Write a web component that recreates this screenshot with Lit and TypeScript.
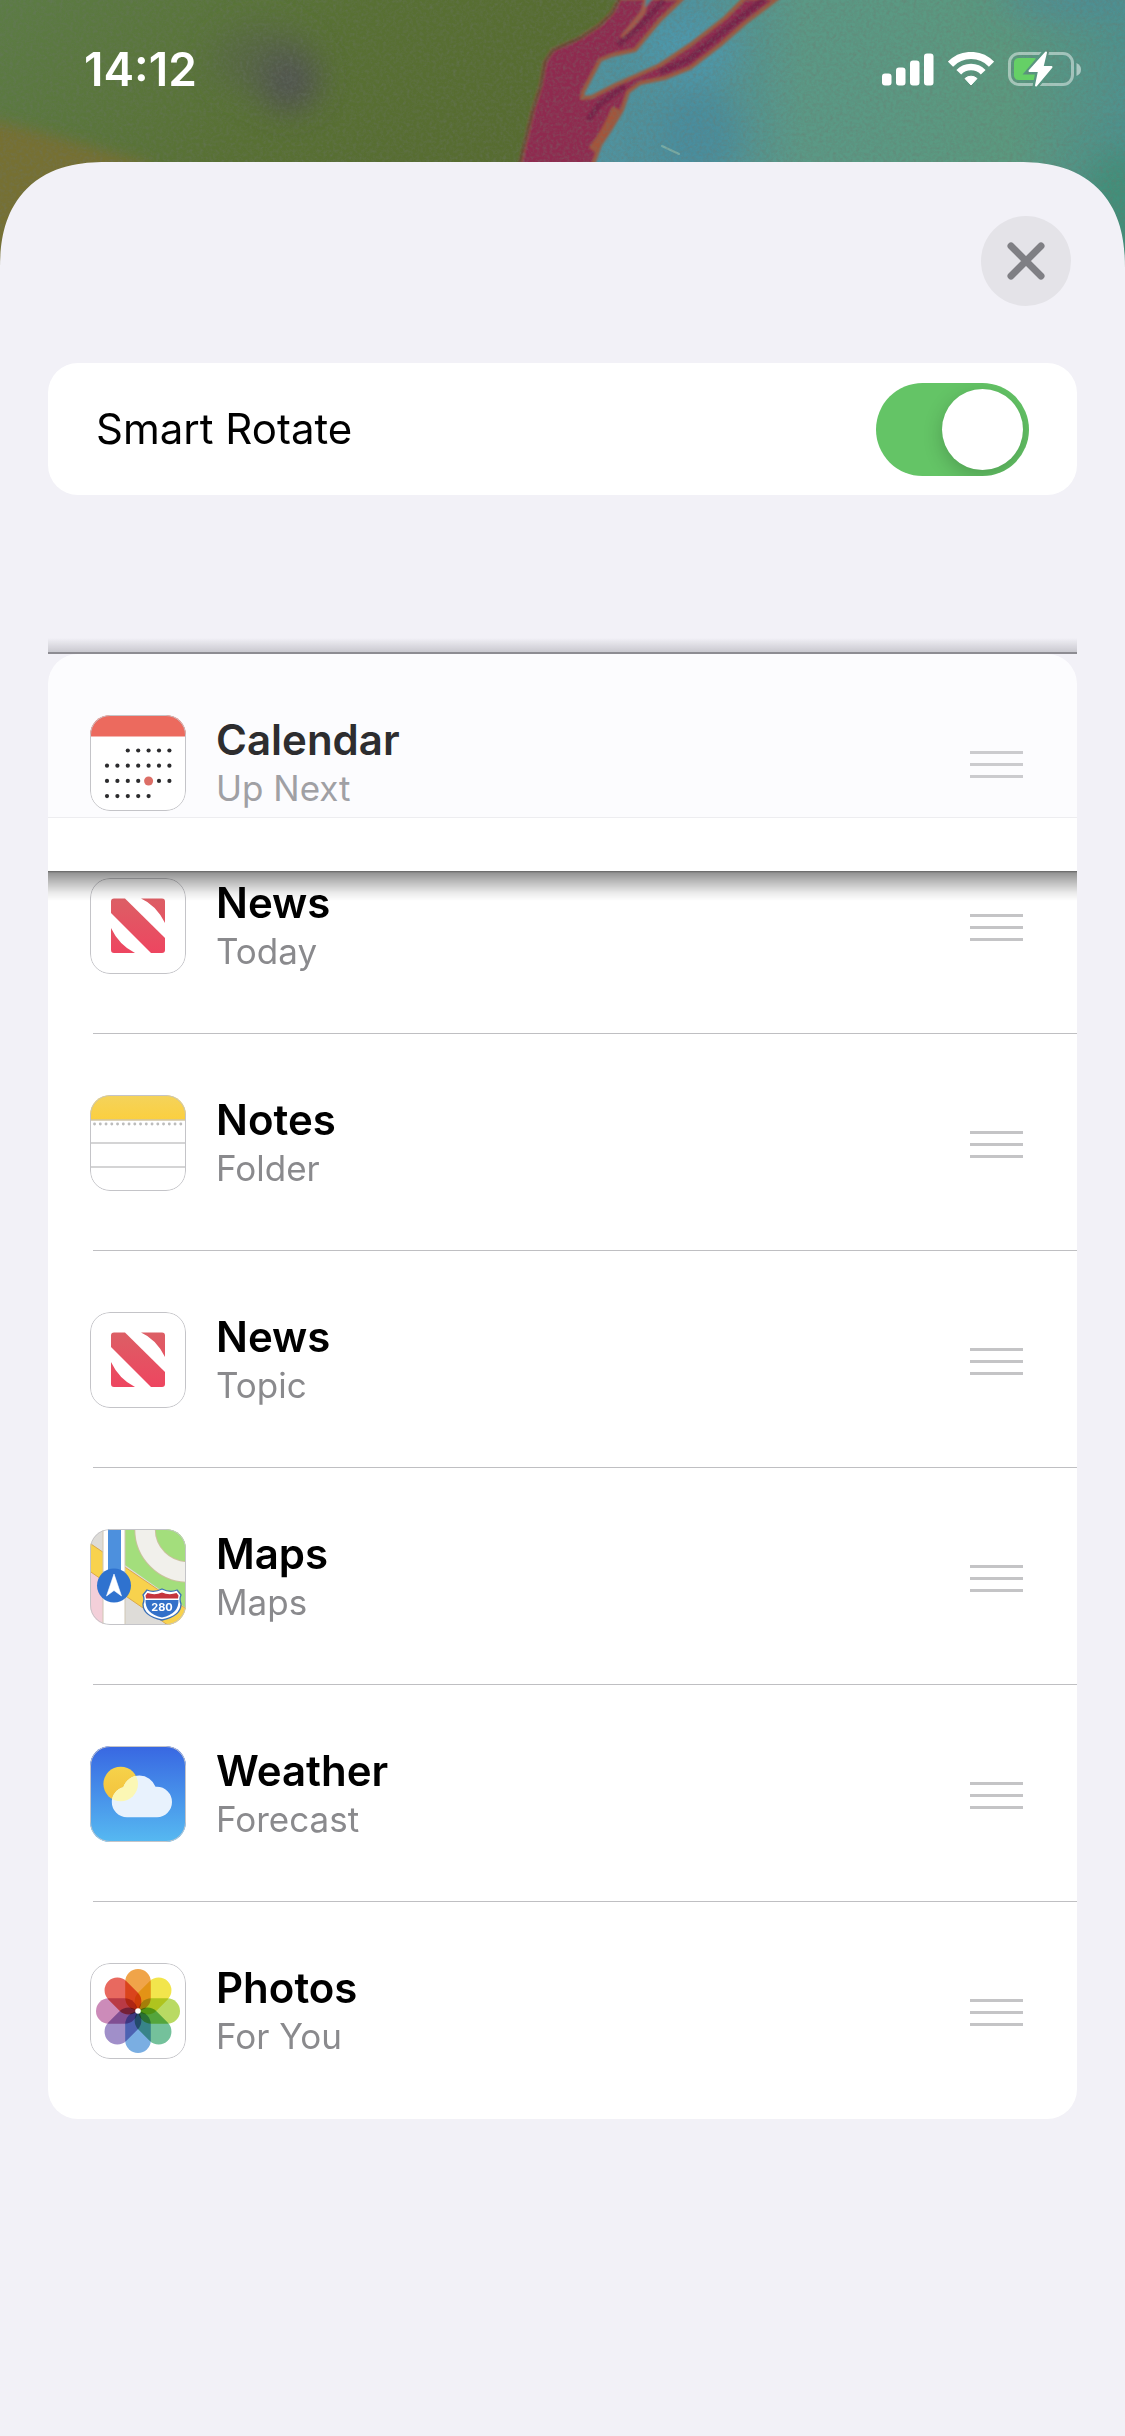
import { LitElement, html, svg, css, type SVGTemplateResult } from "lit";
import { customElement, property, state } from "lit/decorators.js";
import { classMap } from "lit/directives/class-map.js";

interface Widget {
  name: string;
  detail: string;
  icon: keyof typeof art;
  lifted?: boolean;
}

const calendarDots: Array<[number, number]> = [];
[[2, 6], [0, 6], [0, 6], [0, 4]].forEach(([from, to], r) => {
  for (let c = from; c <= to; c++) calendarDots.push([17 + c * 10.4, 35.5 + r * 15.2]);
});

const petals = ["#f0a449", "#f2e54c", "#b9da63", "#74c19b", "#7aaee2", "#a08fc9", "#cc8bb9", "#e8695f"];

const news = svg`
  <defs>
    <linearGradient id="red" x1="0" y1="20" x2="0" y2="76" gradientUnits="userSpaceOnUse">
      <stop offset="0" stop-color="#dc5f65"></stop>
      <stop offset="1" stop-color="#ee4560"></stop>
    </linearGradient>
  </defs>
  <rect width="96" height="96" fill="#fff"></rect>
  <g fill="url(#red)">
    <path d="M24 20.500H35L75 60V72Q75 75 72 75H61L21 35V23.500Q21 20.500 24 20.500Z"></path>
    <path d="M51 20.500H72Q75 20.500 75 23.500V45Q66 27 51 20.500Z"></path>
    <path d="M21 50Q29 67 45 75H24Q21 75 21 72Z"></path>
  </g>`;

const art = {
  calendar: svg`
    <rect width="96" height="96" fill="#fff"></rect>
    <rect width="96" height="21.500" fill="#ec6a5e"></rect>
    ${calendarDots.map(([x, y]) => svg`<circle cx=${x} cy=${y} r="2.100" fill="#2b2b2d"></circle>`)}
    <circle cx="58.600" cy="66" r="4.500" fill="#dc6e66"></circle>`,
  news,
  notes: svg`
    <defs>
      <linearGradient id="pad" x1="0" y1="0" x2="0" y2="1">
        <stop offset="0" stop-color="#f4d35c"></stop>
        <stop offset="1" stop-color="#fbcf3f"></stop>
      </linearGradient>
    </defs>
    <rect width="96" height="96" fill="#fff"></rect>
    <rect width="96" height="24.500" fill="url(#pad)"></rect>
    <path d="M0 25H96" stroke="#b9a878" stroke-width="1.200"></path>
    <path d="M4.500 29H94" stroke="#bcbcbc" stroke-width="2.800" stroke-linecap="round" stroke-dasharray="0.1 5.65"></path>
    <path d="M0 48H96M0 72H96" stroke="#c6c6c8" stroke-width="1.700"></path>`,
  maps: svg`
    <rect width="96" height="96" fill="#dedcd8"></rect>
    <path d="M0 42L14 52V96H0Z" fill="#f3cfd9"></path>
    <path d="M35 0H96V79L35 36Z" fill="#a3de7c"></path>
    <circle cx="98" cy="0" r="43" fill="none" stroke="#c9c29c" stroke-width="21.500"></circle>
    <circle cx="98" cy="0" r="43" fill="none" stroke="#f1f0eb" stroke-width="19.500"></circle>
    <path d="M-2 13L98 81V110L-2 41Z" fill="#f8d24d" stroke="#d9a94e" stroke-width="1"></path>
    <path d="M13 -2H35V98H13Z" fill="#fff" stroke="#cfc6b4" stroke-width="1"></path>
    <rect x="18" width="13" height="50" fill="#4d90dd"></rect>
    <circle cx="24" cy="56.500" r="17" fill="#2f72cf"></circle>
    <path d="M24 45L31.500 67L24 61.500L16.500 67Z" fill="#fff" stroke="#fff" stroke-width="0.600" stroke-linejoin="round"></path>
    <path d="M57 61Q64 64 72 60Q80 64 87 61L91 66Q89 70 91 75Q91 87 72 91Q53 87 53 75Q55 70 53 66Z"
      fill="#fff" stroke="#3a70b8" stroke-width="1.300" stroke-linejoin="round"></path>
    <path d="M57.500 64Q65 66.500 72 63.500Q79 66.500 86.500 64L88.500 66.500L88 69.500H56L55.500 66.500Z" fill="#c5353c"></path>
    <path d="M55.500 71H88.500Q89 85 72 88.500Q55 85 55.500 71Z" fill="#3371c9"></path>
    <text x="72" y="81.500" text-anchor="middle" font-family="Inter, sans-serif" font-size="11" font-weight="700" fill="#fff">280</text>`,
  weather: svg`
    <defs>
      <linearGradient id="sky" x1="0" y1="0" x2="0" y2="1">
        <stop offset="0" stop-color="#3867e2"></stop>
        <stop offset="1" stop-color="#56b9f1"></stop>
      </linearGradient>
      <linearGradient id="sun" x1="0" y1="0" x2="0" y2="1">
        <stop offset="0" stop-color="#f6d24a"></stop>
        <stop offset="1" stop-color="#f3c23c"></stop>
      </linearGradient>
      <clipPath id="cloud">
        <circle cx="49.500" cy="46.500" r="17"></circle>
        <circle cx="37" cy="56" r="15.200"></circle>
        <circle cx="66.800" cy="56" r="15.200"></circle>
        <rect x="37" y="46" width="30" height="25.200"></rect>
      </clipPath>
    </defs>
    <rect width="96" height="96" fill="url(#sky)"></rect>
    <circle cx="30.700" cy="38" r="17.300" fill="url(#sun)"></circle>
    <g clip-path="url(#cloud)">
      <rect width="96" height="96" fill="#e8f2fd"></rect>
      <circle cx="30.700" cy="38" r="17.300" fill="#fbf7b4"></circle>
    </g>`,
  photos: svg`
    <rect width="96" height="96" fill="#fff"></rect>
    <g class="petals">
      ${petals.map(
        (fill, i) => svg`<rect class="petal" x="35.200" y="6" width="25.600" height="41.500" rx="12.800"
          fill=${fill} transform="rotate(${i * 45} 48 48)"></rect>`
      )}
    </g>
    <circle cx="48" cy="48" r="2.800" fill="#fff"></circle>`,
};

@customElement("app-icon")
class AppIcon extends LitElement {
  @property() name: keyof typeof art = "news";

  static styles = css`
    :host {
      display: block;
      flex: none;
      position: relative;
      width: 96px;
      height: 96px;
      border-radius: 20px;
      overflow: hidden;
    }
    .art {
      display: block;
      width: 100%;
      height: 100%;
    }
    .petals {
      isolation: isolate;
    }
    .petal {
      mix-blend-mode: multiply;
    }
    .rim {
      position: absolute;
      inset: 0;
      border: 1px solid #c4c4c8;
      border-radius: 20px;
    }
  `;

  render() {
    const picture: SVGTemplateResult = art[this.name];
    return html`<svg class="art" viewBox="0 0 96 96" aria-hidden="true">${picture}</svg><span class="rim"></span>`;
  }
}

@customElement("wall-paper")
class WallPaper extends LitElement {
  static styles = css`
    :host {
      display: block;
    }
    .scene {
      display: block;
      width: 100%;
      height: 100%;
    }
  `;

  render() {
    return html`<svg class="scene" viewBox="0 0 1125 290" preserveAspectRatio="xMidYMin slice" aria-hidden="true">
      <defs>
        <linearGradient id="grass" x1="0" y1="0" x2="1" y2="0.400">
          <stop offset="0" stop-color="#5c7c45"></stop>
          <stop offset="0.500" stop-color="#587033"></stop>
          <stop offset="1" stop-color="#566a2f"></stop>
        </linearGradient>
        <linearGradient id="water" x1="540" y1="0" x2="1125" y2="0" gradientUnits="userSpaceOnUse">
          <stop offset="0" stop-color="#4f93a2"></stop>
          <stop offset="0.260" stop-color="#50929c"></stop>
          <stop offset="0.450" stop-color="#5b9986"></stop>
          <stop offset="0.800" stop-color="#5b997f"></stop>
          <stop offset="1" stop-color="#4f928e"></stop>
        </linearGradient>
        <filter id="soft" x="-60%" y="-60%" width="220%" height="220%"><feGaussianBlur stdDeviation="16"></feGaussianBlur></filter>
        <filter id="warm" x="-20%" y="-20%" width="140%" height="140%"><feGaussianBlur stdDeviation="7"></feGaussianBlur></filter>
        <filter id="edge"><feGaussianBlur stdDeviation="1.300"></feGaussianBlur></filter>
        <filter id="grain" x="0" y="0" width="100%" height="100%">
          <feTurbulence type="fractalNoise" baseFrequency="0.3" numOctaves="3" seed="4"></feTurbulence>
          <feColorMatrix values="0 0 0 0 0.150  0 0 0 0 0.180  0 0 0 0 0.150  1.200 1.200 0 0 -1"></feColorMatrix>
        </filter>
      </defs>
      <rect width="1125" height="290" fill="url(#water)"></rect>
      <g filter="url(#soft)">
        <ellipse cx="700" cy="135" rx="40" ry="46" fill="#458b9f" opacity="0.600"></ellipse>
        <ellipse cx="690" cy="50" rx="46" ry="34" fill="#4d9ab2" opacity="0.700"></ellipse>
        <ellipse cx="1065" cy="0" rx="70" ry="16" fill="#4a88a0" opacity="0.600"></ellipse>
        <ellipse cx="1120" cy="220" rx="40" ry="70" fill="#3f8d74" opacity="0.800"></ellipse>
      </g>
      <path d="M0 0H630L570 60L540 290H0Z" fill="url(#grass)"></path>
      <g filter="url(#warm)">
        <path d="M-40 112L40 132L150 164L120 300H-40Z" fill="#766f30"></path>
      </g>
      <g filter="url(#soft)">
        <ellipse cx="288" cy="78" rx="30" ry="32" fill="#4e4459" opacity="0.850"></ellipse>
        <ellipse cx="262" cy="60" rx="50" ry="34" fill="#55604a" opacity="0.600"></ellipse>
      </g>
      <g filter="url(#edge)">
        <path d="M520 164L533 110L541 85L545 62L553 50L580 38L600 25L612 13L620 -2H683L660 20L645 38L635 50L612 55L600 60L583 92L582 98L592 97L615 85L640 74L660 65L690 45L725 18L745 -2H778L745 23L720 45L690 68L665 78L640 83L628 92L622 110L610 130L600 145L591 170H518Z"
          fill="#8f2b4f" stroke="#9c5a40" stroke-width="4" stroke-linejoin="round"></path>
        <path d="M518 170L533 110L541 85L545 62L553 50L580 38L600 25L612 13L620 -2" fill="none" stroke="#4b4333" stroke-width="2"></path>
        <path d="M647 -3L643 12L622 38" fill="none" stroke="#a45a48" stroke-width="5"></path>
        <path d="M646 -3H654L645 8Z" fill="#4f8590"></path>
        <path d="M664 0L640 26L618 45M765 -2L720 34L688 60L660 72M625 86L600 104L588 120" fill="none" stroke="#6d1d47" stroke-width="6" opacity="0.650"></path>
        <path d="M616 108Q606 132 592 150" fill="none" stroke="#a3553a" stroke-width="8"></path>
      </g>
      <path d="M662 146L679 154" stroke="#79ada6" stroke-width="2" stroke-linecap="round"></path>
      <rect width="1125" height="290" filter="url(#grain)" opacity="0.450"></rect>
    </svg>`;
  }
}

@customElement("widget-row")
class WidgetRow extends LitElement {
  @property({ attribute: false }) widget!: Widget;

  static styles = css`
    :host {
      display: block;
    }
    .row {
      display: flex;
      align-items: center;
      gap: 30px;
      padding: 61px 54px 59px 42px;
    }
    .text {
      flex: 1;
      min-width: 0;
    }
    .name,
    .detail {
      margin: 0;
    }
    .name {
      font-size: 42px;
      line-height: 50px;
      font-weight: 600;
      color: #000;
    }
    .detail {
      font-size: 35px;
      line-height: 46px;
      color: #8a8a8d;
    }
    .handle {
      flex: none;
      padding: 2px 0 0;
      border: 0;
      background: none;
      color: #c4c4c6;
    }
    .lines {
      display: block;
      width: 53px;
      height: 27px;
    }
    .lifted .name {
      color: #2d2d2f;
    }
    .lifted .detail {
      color: #a0a0a4;
    }
    .lifted .handle {
      color: #cbcbce;
    }
  `;

  render() {
    const { name, detail, icon, lifted = false } = this.widget;
    return html`<div class=${classMap({ row: true, lifted })}>
      <app-icon name=${icon}></app-icon>
      <div class="text">
        <h2 class="name">${name}</h2>
        <p class="detail">${detail}</p>
      </div>
      <button class="handle" type="button" aria-label="Reorder ${name}">
        <svg class="lines" viewBox="0 0 53 27" aria-hidden="true">
          <path d="M0 1.500H53M0 13.500H53M0 25.500H53" stroke="currentColor" stroke-width="3"></path>
        </svg>
      </button>
    </div>`;
  }
}

@customElement("app-root")
class AppRoot extends LitElement {
  @state() private smartRotate = true;

  private widgets: Widget[] = [
    { name: "Calendar", detail: "Up Next", icon: "calendar", lifted: true },
    { name: "News", detail: "Today", icon: "news" },
    { name: "Notes", detail: "Folder", icon: "notes" },
    { name: "News", detail: "Topic", icon: "news" },
    { name: "Maps", detail: "Maps", icon: "maps" },
    { name: "Weather", detail: "Forecast", icon: "weather" },
    { name: "Photos", detail: "For You", icon: "photos" },
  ];

  static styles = css`
    :host {
      display: block;
      font-family: Inter, "Liberation Sans", sans-serif;
      color: #000;
    }
    .screen {
      position: relative;
      display: flex;
      flex-direction: column;
      min-height: 100vh;
      background: #f2f1f7;
    }
    .backdrop {
      position: absolute;
      inset: 0 0 auto;
      height: 290px;
    }
    .status {
      position: relative;
      display: flex;
      justify-content: space-between;
      box-sizing: border-box;
      height: 162px;
      padding: 42px 43px 0 84px;
      color: #fff;
    }
    .time {
      font-size: 46px;
      line-height: 54px;
      font-weight: 600;
    }
    .signals {
      display: flex;
      align-items: center;
      align-self: flex-start;
      gap: 14px;
      height: 54px;
    }
    .glyph {
      display: block;
    }
    .sheet {
      position: relative;
      flex: 1;
      padding: 54px 48px;
      border-radius: 92px 92px 0 0;
      background: #f2f1f7;
    }
    @supports (corner-shape: superellipse(1.2)) {
      .sheet {
        border-radius: 106px 106px 0 0;
        corner-shape: superellipse(1.25);
      }
    }
    .top {
      display: flex;
      justify-content: flex-end;
      padding-right: 6px;
    }
    .close {
      display: grid;
      place-items: center;
      width: 90px;
      height: 90px;
      padding: 0;
      border: 0;
      border-radius: 50%;
      background: #e4e3e8;
      color: #7f7f84;
    }
    .option {
      display: flex;
      align-items: center;
      justify-content: space-between;
      box-sizing: border-box;
      min-height: 132px;
      margin-top: 57px;
      padding: 0 48px;
      border-radius: 30px;
      background: #fff;
      font-size: 42px;
      line-height: 50px;
    }
    .switch {
      appearance: none;
      display: flex;
      box-sizing: border-box;
      width: 153px;
      height: 93px;
      margin: 0;
      padding: 6px;
      border-radius: 47px;
      background: #e9e9eb;
      overflow: hidden;
    }
    .switch::before {
      content: "";
      width: 81px;
      height: 81px;
      border-radius: 50%;
      background: #fff;
      box-shadow: 0 6px 20px rgba(0, 0, 0, 0.2);
    }
    .switch:checked {
      justify-content: flex-end;
      background: #64c466;
    }
    .list {
      margin: 105px 0 0;
      padding: 0;
      list-style: none;
    }
    .item {
      display: flex;
      flex-direction: column;
      background: #fff;
    }
    .item::after {
      content: "";
      height: 1px;
      margin-left: 45px;
      background: #bfbfc2;
    }
    .item:last-child {
      border-radius: 0 0 30px 30px;
    }
    .item:last-child::after {
      background: none;
    }
    .item.slot {
      position: relative;
      z-index: 1;
      top: 54px;
      background: linear-gradient(#fcfcfe 163px, #ededf0 163px, #ededf0 164px, #fff 164px);
      border-radius: 30px 30px 0 0;
    }
    .item.slot::after {
      background: none;
    }
    .shade {
      position: absolute;
      left: 0;
      right: 0;
    }
    .above {
      bottom: 100%;
      height: 16px;
      background: linear-gradient(rgba(60, 60, 70, 0), rgba(60, 60, 70, 0.22) 14px, rgba(40, 40, 46, 0.5) 14px);
    }
    .below {
      top: 100%;
      height: 30px;
      background: linear-gradient(rgba(0, 0, 0, 0.62), rgba(0, 0, 0, 0.42) 2px, rgba(0, 0, 0, 0.28) 10px, rgba(0, 0, 0, 0.08) 22px, rgba(0, 0, 0, 0));
    }
  `;

  private toggle(e: Event) {
    this.smartRotate = (e.target as HTMLInputElement).checked;
  }

  render() {
    return html`<div class="screen">
      <wall-paper class="backdrop"></wall-paper>
      <header class="status">
        <time class="time">14:12</time>
        <div class="signals">
          <svg class="glyph" width="52" height="33" viewBox="0 0 52 33" fill="currentColor" role="img" aria-label="Signal">
            <rect x="0" y="20.500" width="9.500" height="12" rx="3"></rect>
            <rect x="14" y="14.500" width="9.500" height="18" rx="3"></rect>
            <rect x="28" y="7.500" width="9.500" height="25" rx="3"></rect>
            <rect x="42" y="0.500" width="9.500" height="32" rx="3"></rect>
          </svg>
          <svg class="glyph" width="46" height="34" viewBox="0 0 46 34" fill="none" stroke="currentColor" role="img" aria-label="Wi-Fi">
            <path d="M2.500 12.200A28.500 28.500 0 0 1 43.500 12.200" stroke-width="7.200"></path>
            <path d="M10.800 20.200A17 17 0 0 1 35.200 20.200" stroke-width="6.600"></path>
            <path d="M23 33L17 26.500A9 9 0 0 1 29 26.500Z" fill="currentColor" stroke-width="1" stroke-linejoin="round"></path>
          </svg>
          <svg class="glyph" width="74" height="36" viewBox="0 0 74 36" role="img" aria-label="Charging">
            <defs>
              <mask id="gap">
                <rect width="74" height="36" fill="#fff"></rect>
                <path d="M38 0.500L21 20.500H30.500L27.500 35.500L44 15.500H35Z" fill="#000" stroke="#000" stroke-width="6"></path>
              </mask>
            </defs>
            <g mask="url(#gap)">
              <rect x="1.500" y="2.500" width="63" height="31" rx="9.500" fill="none" stroke="#fff" stroke-opacity="0.450" stroke-width="3"></rect>
              <rect x="6" y="7" width="24" height="22" rx="4.500" fill="#65d066"></rect>
            </g>
            <path d="M68.500 12Q73 14 73 18.500Q73 23 68.500 25Z" fill="#fff" fill-opacity="0.500"></path>
            <path d="M38 1.500L21.500 20H31L28 34.500L43.500 16H34.500Z" fill="#fff" stroke="#fff" stroke-width="2" stroke-linejoin="round"></path>
          </svg>
        </div>
      </header>
      <main class="sheet">
        <div class="top">
          <button class="close" type="button" aria-label="Close">
            <svg class="glyph" width="38" height="38" viewBox="0 0 38 38" aria-hidden="true">
              <path d="M4 4L34 34M34 4L4 34" stroke="currentColor" stroke-width="7" stroke-linecap="round"></path>
            </svg>
          </button>
        </div>
        <div class="option">
          <label for="smart-rotate">Smart Rotate</label>
          <input class="switch" id="smart-rotate" type="checkbox" role="switch" .checked=${this.smartRotate} @change=${this.toggle} />
        </div>
        <ul class="list">
          ${this.widgets.map(
            (w) => html`<li class=${classMap({ item: true, slot: !!w.lifted })}>
              ${w.lifted ? html`<span class="shade above"></span><span class="shade below"></span>` : null}
              <widget-row .widget=${w}></widget-row>
            </li>`
          )}
        </ul>
      </main>
    </div>`;
  }
}
